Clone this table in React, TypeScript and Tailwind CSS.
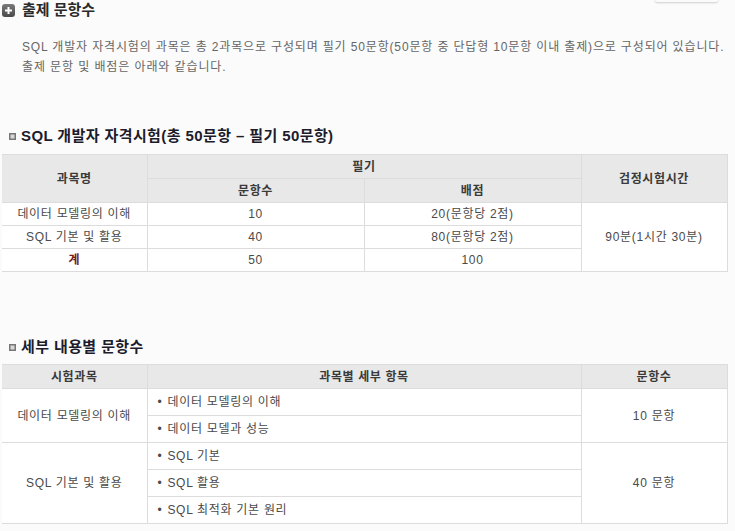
import React from "react";

const font = { fontFamily: '"Liberation Sans", "Noto Sans CJK KR", sans-serif' };

function PlusIcon() {
  return (
    <svg width="13" height="13" viewBox="0 0 13 13" className="shrink-0">
      <defs>
        <linearGradient id="pg" x1="0" y1="0" x2="0" y2="1">
          <stop offset="0" stopColor="#7a7a7a" />
          <stop offset="1" stopColor="#4a4a4a" />
        </linearGradient>
      </defs>
      <rect x="0" y="0" width="13" height="13" rx="3" fill="url(#pg)" />
      <rect x="5.5" y="3" width="2" height="7" fill="#fff" />
      <rect x="3" y="5.5" width="7" height="2" fill="#fff" />
    </svg>
  );
}

function SquareIcon() {
  return (
    <svg width="7" height="7" viewBox="0 0 7 7" className="shrink-0">
      <rect x="0.75" y="0.75" width="5.5" height="5.5" fill="#d8d8d8" stroke="#777" strokeWidth="1.5" />
    </svg>
  );
}

function SubHeading({ children }: { children: React.ReactNode }) {
  return (
    <div className="flex items-center h-[20px] pl-[9px] gap-[5px]">
      <SquareIcon />
      <span className="text-[15px] font-bold text-[#1c1c2c] tracking-[0.4px]">{children}</span>
    </div>
  );
}

const th = "bg-[#e8e8e8] border border-[#dcdcdc] text-[12px] font-bold text-[#3a3a3a] text-center p-0 tracking-[0.6px]";
const td = "bg-white border border-[#dcdcdc] text-[12px] text-[#4a4a4a] text-center p-0 tracking-[0.7px]";
const tdl = "bg-white border border-[#dcdcdc] text-[12px] text-[#4a4a4a] text-left pl-[10px] p-0 tracking-[0.7px]";

export default function App() {
  return (
    <div className="relative w-[735px] h-[531px] bg-[#fbfbfb] overflow-hidden" style={font}>
      <div className="absolute left-[655px] top-[-20px] w-[63px] h-[22px] bg-[#fbfbfb] rounded-[2px] shadow-[0_1px_2px_rgba(0,0,0,0.18)]" />

      <div className="flex items-center gap-[7px] pl-[2px] pt-[1px] h-[20px]">
        <PlusIcon />
        <span className="text-[15px] font-bold text-[#2a2a2a] tracking-[0px]">출제 문항수</span>
      </div>

      <div className="mt-[17px] pl-[22px] text-[12px] leading-[20px] text-[#666] whitespace-nowrap">
        <div className="tracking-[0.85px]">SQL 개발자 자격시험의 과목은 총 2과목으로 구성되며 필기 50문항(50문항 중 단답형 10문항 이내 출제)으로 구성되어 있습니다.</div>
        <div className="tracking-[0.9px]">출제 문항 및 배점은 아래와 같습니다.</div>
      </div>

      <div className="mt-[49px]">
        <SubHeading>SQL 개발자 자격시험(총 50문항 – 필기 50문항)</SubHeading>
      </div>

      <table className="mt-[8px] ml-[2px] border-collapse table-fixed w-[725px]">
        <colgroup>
          <col className="w-[145px]" />
          <col className="w-[217px]" />
          <col className="w-[217px]" />
          <col className="w-[146px]" />
        </colgroup>
        <tbody>
          <tr className="h-[24px]">
            <th rowSpan={2} className={th + " border-l-0"}>과목명</th>
            <th colSpan={2} className={th}>필기</th>
            <th rowSpan={2} className={th}>검정시험시간</th>
          </tr>
          <tr className="h-[24px]">
            <th className={th}>문항수</th>
            <th className={th}>배점</th>
          </tr>
          <tr className="h-[23px]">
            <td className={td + " border-l-0"}>데이터 모델링의 이해</td>
            <td className={td}>10</td>
            <td className={td}>20(문항당 2점)</td>
            <td rowSpan={3} className={td}>90분(1시간 30분)</td>
          </tr>
          <tr className="h-[23px]">
            <td className={td + " border-l-0"}>SQL 기본 및 활용</td>
            <td className={td}>40</td>
            <td className={td}>80(문항당 2점)</td>
          </tr>
          <tr className="h-[23px]">
            <td className={td + " border-l-0 font-bold text-[#7a1818]"}>계</td>
            <td className={td}>50</td>
            <td className={td}>100</td>
          </tr>
        </tbody>
      </table>

      <div className="mt-[65px]">
        <SubHeading>세부 내용별 문항수</SubHeading>
      </div>

      <table className="mt-[7px] ml-[2px] border-collapse table-fixed w-[725px]">
        <colgroup>
          <col className="w-[145px]" />
          <col className="w-[434px]" />
          <col className="w-[146px]" />
        </colgroup>
        <tbody>
          <tr className="h-[24px]">
            <th className={th + " border-l-0"}>시험과목</th>
            <th className={th}>과목별 세부 항목</th>
            <th className={th}>문항수</th>
          </tr>
          <tr className="h-[27px]">
            <td rowSpan={2} className={td + " border-l-0"}>데이터 모델링의 이해</td>
            <td className={tdl}><span className="mr-[5px]">•</span>데이터 모델링의 이해</td>
            <td rowSpan={2} className={td}>10 문항</td>
          </tr>
          <tr className="h-[27px]">
            <td className={tdl}><span className="mr-[5px]">•</span>데이터 모델과 성능</td>
          </tr>
          <tr className="h-[27px]">
            <td rowSpan={3} className={td + " border-l-0"}>SQL 기본 및 활용</td>
            <td className={tdl}><span className="mr-[5px]">•</span>SQL 기본</td>
            <td rowSpan={3} className={td}>40 문항</td>
          </tr>
          <tr className="h-[27px]">
            <td className={tdl}><span className="mr-[5px]">•</span>SQL 활용</td>
          </tr>
          <tr className="h-[27px]">
            <td className={tdl}><span className="mr-[5px]">•</span>SQL 최적화 기본 원리</td>
          </tr>
        </tbody>
      </table>
    </div>
  );
}
